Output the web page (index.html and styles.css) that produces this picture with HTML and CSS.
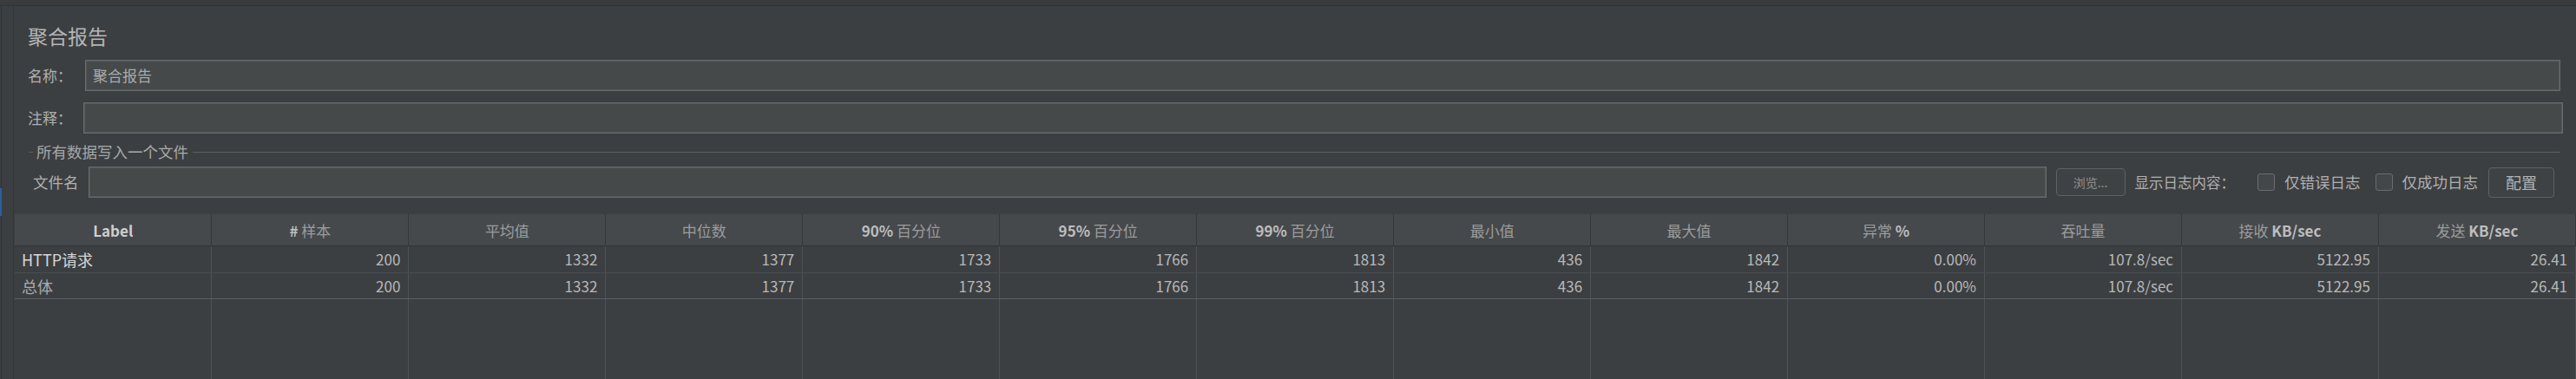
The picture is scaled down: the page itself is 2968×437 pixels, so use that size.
FILE: index.html
```html
<!DOCTYPE html>
<html lang="zh-CN">
<head>
<meta charset="utf-8">
<title>聚合报告</title>
<link rel="stylesheet" href="styles.css">
</head>
<body>
<div class="topbar"></div>
<div class="app">
  <div class="rail"><span class="rail-mark"></span></div>
  <div class="panel">
    <h1 class="title">聚合报告</h1>
    <div class="field name-row">
      <label class="lbl">名称：</label>
      <div class="input">聚合报告</div>
    </div>
    <div class="field comment-row">
      <label class="lbl">注释：</label>
      <div class="input"></div>
    </div>
    <div class="group">
      <div class="group-head"><span class="dash"></span><span class="group-title">所有数据写入一个文件</span><span class="group-line"></span></div>
      <div class="file-row">
        <label class="lbl file-lbl">文件名</label>
        <div class="input file-input"></div>
        <button class="btn browse">浏览...</button>
        <span class="lbl log-lbl">显示日志内容：</span>
        <span class="check"></span><span class="lbl check-lbl">仅错误日志</span>
        <span class="check"></span><span class="lbl check-lbl">仅成功日志</span>
        <button class="btn config">配置</button>
      </div>
    </div>
    <div class="table-wrap">
      <table class="grid">
        <thead>
          <tr>
            <th class="main"><b>Label</b></th>
            <th><b>#</b> 样本</th>
            <th>平均值</th>
            <th>中位数</th>
            <th><b>90%</b> 百分位</th>
            <th><b>95%</b> 百分位</th>
            <th><b>99%</b> 百分位</th>
            <th>最小值</th>
            <th>最大值</th>
            <th>异常 <b>%</b></th>
            <th>吞吐量</th>
            <th>接收 <b>KB/sec</b></th>
            <th>发送 <b>KB/sec</b></th>
          </tr>
        </thead>
        <tbody>
          <tr class="r1">
            <td class="name strong">HTTP请求</td>
            <td>200</td><td>1332</td><td>1377</td><td>1733</td><td>1766</td><td>1813</td><td>436</td><td>1842</td><td>0.00%</td><td>107.8/sec</td><td>5122.95</td><td>26.41</td>
          </tr>
          <tr class="r2">
            <td class="name">总体</td>
            <td>200</td><td>1332</td><td>1377</td><td>1733</td><td>1766</td><td>1813</td><td>436</td><td>1842</td><td>0.00%</td><td>107.8/sec</td><td>5122.95</td><td>26.41</td>
          </tr>
          <tr class="filler">
            <td></td><td></td><td></td><td></td><td></td><td></td><td></td><td></td><td></td><td></td><td></td><td></td><td></td>
          </tr>
        </tbody>
      </table>
    </div>
  </div>
</div>
</body>
</html>
```
FILE: styles.css
```css
html, body {
  margin: 0;
  padding: 0;
  background: #3c3f41;
  width: 2968px;
  height: 437px;
  overflow: hidden;
  font-family: "Noto Sans CJK SC", "Noto Sans", sans-serif;
  color: #bbbbbb;
}

.topbar {
  height: 6px;
  background: #393b3d;
  border-bottom: 1px solid #2f3133;
}

.app {
  display: flex;
  height: 430px;
}

.rail {
  width: 13px;
  flex: 0 0 13px;
  border-left: 1px solid #313335;
  border-right: 1px solid #333537;
  margin-left: 1px;
  position: relative;
}

.rail-mark {
  position: absolute;
  left: -2px;
  top: 210px;
  width: 2px;
  height: 32px;
  background: #2d5f93;
}

.panel {
  flex: 1;
  display: flex;
  flex-direction: column;
  padding-top: 22px;
  min-width: 0;
}

.title {
  margin: 0 0 16px 16px;
  font-size: 23px;
  line-height: 24px;
  font-weight: normal;
  color: #b5b5b5;
}

.field {
  display: flex;
  align-items: center;
  height: 36px;
  padding-left: 16px;
  padding-right: 18px;
}

.comment-row {
  margin-top: 13px;
  padding-right: 15px;
}

.lbl {
  font-size: 18px;
  line-height: 20px;
  color: #b0b0b0;
  white-space: nowrap;
}

.field .lbl {
  width: 66px;
  flex: 0 0 66px;
  font-size: 17px;
}

.comment-row .lbl {
  width: 64px;
  flex: 0 0 64px;
}

.input {
  flex: 1;
  height: 100%;
  box-sizing: border-box;
  background: #45494a;
  border: 1px solid #686b6c;
  box-shadow: inset 0 0 0 1px #55595a;
  font-size: 17px;
  line-height: 34px;
  padding-left: 8px;
  color: #a9a9a9;
}

.group {
  margin-top: 11px;
  padding-left: 17px;
  padding-right: 18px;
}

.group-head {
  display: flex;
  align-items: center;
  height: 20px;
}

.dash {
  width: 5px;
  height: 1px;
  background: #5c5f60;
  margin-right: 4px;
}

.group-title {
  font-size: 17.5px;
  line-height: 20px;
  color: #a8a8a8;
  white-space: nowrap;
}

.group-line {
  flex: 1;
  height: 1px;
  background: #5c5f60;
  margin-left: 5px;
}

.file-row {
  display: flex;
  align-items: center;
  height: 36px;
  margin-top: 7px;
  padding-left: 5px;
  padding-right: 7px;
}

.file-lbl {
  width: 64px;
  flex: 0 0 64px;
  font-size: 17.5px;
}

.file-input {
  margin-right: 11px;
}

.btn {
  box-sizing: border-box;
  background: #3e4244;
  border: 1px solid #5e6162;
  border-radius: 4px;
  font-family: "Noto Sans CJK SC", "Noto Sans", sans-serif;
  color: #a0a0a0;
  padding: 0;
}

.browse {
  width: 80px;
  height: 32px;
  font-size: 14px;
  margin-right: 11px;
  color: #8f8f8f;
}

.log-lbl {
  font-size: 16.5px;
  margin-right: 26px;
}

.check {
  box-sizing: border-box;
  width: 20px;
  height: 20px;
  border: 1px solid #6a6d6e;
  border-radius: 3px;
  background: #43474a;
  margin-right: 11px;
  flex: 0 0 20px;
}

.check-lbl {
  font-size: 17.5px;
  margin-right: 17px;
}

.check-lbl:last-of-type {
  margin-right: 12px;
}

.config {
  width: 76px;
  height: 35px;
  font-size: 18px;
  color: #b3b3b3;
}

.table-wrap {
  margin-top: 19px;
  margin-left: 1px;
  flex: 1;
  overflow: hidden;
}

.grid {
  border-collapse: collapse;
  table-layout: fixed;
  width: 2951px;
  height: 100%;
  font-size: 17px;
}

.grid th {
  height: 36px;
  background: #45494c;
  border-right: 1px solid #35383a;
  border-bottom: 1px solid #323436;
  font-weight: normal;
  color: #9c9c9c;
  text-align: center;
  padding: 0;
  white-space: nowrap;
}

.grid th b {
  font-weight: bold;
  color: #bdbdbd;
}

.grid th.main b {
  color: #cfcfcf;
}

.grid td {
  border-right: 1px solid #4f5254;
  border-bottom: 1px solid #4a4d4f;
  text-align: right;
  padding: 0 9px 0 4px;
  color: #b8b8b8;
  white-space: nowrap;
  line-height: 20px;
}

.grid tr.r1 td {
  height: 30px;
}

.grid tr.r2 td {
  height: 29px;
  border-bottom: 1px solid #5d6062;
}

.grid td.name {
  text-align: left;
  padding-left: 8px;
  font-size: 18px;
  color: #a9a9a9;
}

.grid td.strong {
  color: #d6d6d6;
}

.grid tr.filler td {
  border-bottom: none;
}
```
